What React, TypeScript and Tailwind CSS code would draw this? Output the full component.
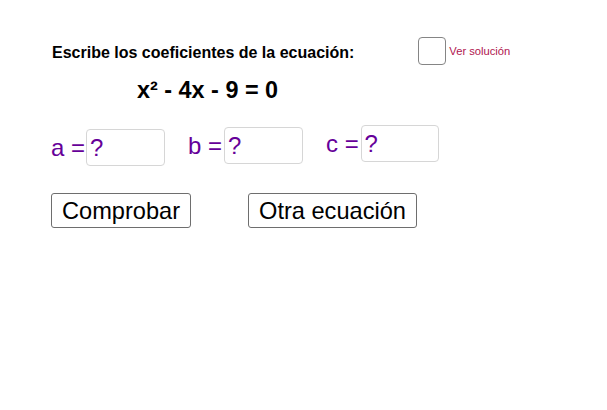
import React from "react";

function Field({ label, labelW, boxW, mt }: { label: string; labelW: string; boxW: string; mt: string }) {
  return (
    <div className={`flex items-start ${mt}`}>
      <div className={`${labelW} pt-[7px] text-[24px] leading-[24px] text-[#660099] whitespace-nowrap`}>{label}</div>
      <div className={`${boxW} h-[37px] box-border rounded-[4px] border border-[#d6d6d6] bg-white pl-[3px] pt-[6px] text-[24px] leading-[24px] text-[#660099]`}>
        ?
      </div>
    </div>
  );
}

export default function App() {
  return (
    <div className="w-[607px] h-[410px] bg-white font-['Liberation_Sans',Arial,sans-serif] text-black">
      <div className="pl-[52px] pt-[37px]">
        <div className="flex items-start">
          <div className="mt-[8px] text-[16px] leading-[16px] font-bold whitespace-nowrap">
            Escribe los coeficientes de la ecuación:
          </div>
          <div className="ml-[64px] w-[28px] h-[28px] box-border rounded-[4px] border-[1.5px] border-[#858585] bg-white" />
          <div className="ml-[3px] mt-[9px] text-[11.2px] leading-[11px] text-[#b01550] whitespace-nowrap">
            Ver solución
          </div>
        </div>

        <div className="ml-[85px] mt-[14px] text-[23.4px] leading-[23px] font-bold whitespace-nowrap">
          x² - 4x - 9 = 0
        </div>

        <div className="mt-[23px] -ml-[1px] flex items-start gap-[23px]">
          <Field label="a =" labelW="w-[35px]" boxW="w-[79px]" mt="mt-[4px]" />
          <Field label="b =" labelW="w-[36px]" boxW="w-[79px]" mt="mt-[2px]" />
          <Field label="c =" labelW="w-[34.5px]" boxW="w-[78px]" mt="mt-0" />
        </div>

        <div className="mt-[27px] -ml-[1px] flex items-start gap-[57px]">
          <button className="w-[140px] h-[35px] box-border rounded-[3px] border border-[#6e6e6e] bg-white pt-[1px] text-center text-[23.6px] leading-[24px] text-black whitespace-nowrap">
            Comprobar
          </button>
          <button className="w-[169px] h-[35px] box-border rounded-[3px] border border-[#6e6e6e] bg-white pt-[1px] text-center text-[23.6px] leading-[24px] text-black whitespace-nowrap">
            Otra ecuación
          </button>
        </div>
      </div>
    </div>
  );
}
